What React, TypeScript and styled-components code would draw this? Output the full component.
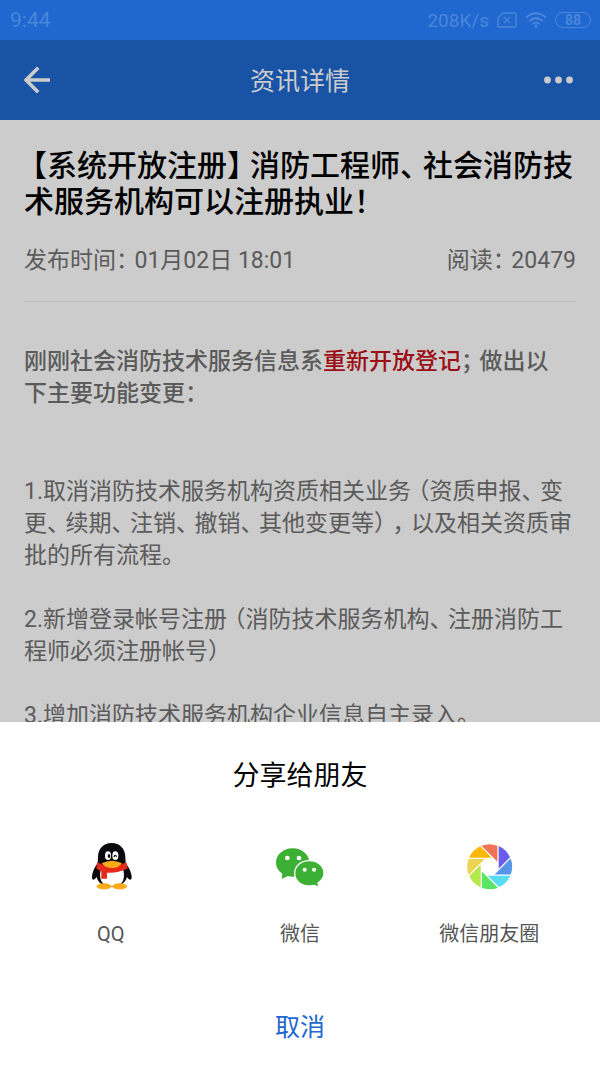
import React from 'react';
import styled, { createGlobalStyle } from 'styled-components';

const GlobalStyle = createGlobalStyle`
  * { box-sizing: border-box; }
  body {
    margin: 0;
    background: #ffffff;
    font-family: Roboto, 'Noto Sans CJK SC', sans-serif;
  }
  button { border: 0; padding: 0; background: none; font: inherit; cursor: pointer; }
  h1, h2, p { margin: 0; }
`;

const Screen = styled.div`
  min-height: 100vh;
  display: flex;
  flex-direction: column;
`;

const StatusBar = styled.div`
  display: flex;
  align-items: center;
  justify-content: space-between;
  height: 40px;
  padding: 0 9px 0 10px;
  background: #2068d0;
  color: #4a86da;
  font-size: 21px;
`;

const StatusGroup = styled.div`
  display: flex;
  align-items: center;
  gap: 8px;
`;

const Speed = styled.span`
  font-size: 19px;
`;

const Battery = styled.span`
  width: 36px;
  height: 16px;
  border: 1px solid currentColor;
  border-radius: 8px;
  font-size: 14px;
  font-weight: 700;
  line-height: 14px;
  text-align: center;
`;

const NavBar = styled.header`
  display: grid;
  grid-template-columns: 80px 1fr 80px;
  align-items: center;
  height: 80px;
  background: #2068d0;
  color: #ffffff;
`;

const NavTitle = styled.h2`
  padding-top: 4px;
  font-size: 25px;
  font-weight: 400;
  line-height: 32px;
  text-align: center;
`;

const NavButton = styled.button<{ $end?: boolean }>`
  display: flex;
  justify-content: ${(p) => (p.$end ? 'flex-end' : 'flex-start')};
  padding: 24px;
  color: inherit;
`;

const Article = styled.article`
  padding: 28px 24px;
  color: #727272;
  font-size: 23px;
  line-height: 32px;
`;

const Meta = styled.div`
  display: flex;
  justify-content: space-between;
  margin-bottom: 44px;
  padding: 24px 0;
  padding-top: 25px;
  border-bottom: 1px solid #ececec;
`;

const Lead = styled.p`
  margin-bottom: 66px;
  font-weight: 500;
`;

const Highlight = styled.span`
  color: #c2121a;
`;

const Paragraph = styled.p`
  margin-bottom: 32px;
`;

/* Half-width punctuation, with the remaining air kept on its outer side. */
const Mark = styled.span<{ $open?: boolean }>`
  margin: ${(p) => (p.$open ? '0 0 0 7px' : '0 7px 0 0')};
  font-feature-settings: 'halt';
`;

const Headline = styled.h1`
  color: #000000;
  font-size: 30px;
  font-weight: 500;
  line-height: 36px;

  ${Mark} {
    margin-right: 8px;
  }
  ${Mark}:first-child {
    margin-right: 0;
    margin-left: 8px;
  }
`;

const Scrim = styled.div`
  position: fixed;
  inset: 40px 0 0;
  background: rgba(0, 0, 0, 0.2);
`;

const Sheet = styled.section`
  position: fixed;
  inset: auto 0 0;
  display: flex;
  flex-direction: column;
  padding: 38px 16px 19px;
  background: #ffffff;
`;

const SheetTitle = styled.h2`
  margin-bottom: 43px;
  font-size: 27px;
  font-weight: 400;
  line-height: 32px;
  text-align: center;
`;

const Targets = styled.div`
  display: grid;
  grid-template-columns: repeat(3, 1fr);
  margin-bottom: 62px;
`;

const Target = styled.button`
  display: flex;
  flex-direction: column;
  align-items: center;
  gap: 27px;
  color: #555555;
  font-size: 20px;
  line-height: 24px;
`;

const Cancel = styled.button`
  color: #2068d0;
  font-size: 25px;
  line-height: 40px;
`;

const SimIcon = () => (
  <svg width="20" height="16" viewBox="0 0 20 16" fill="none" stroke="currentColor" strokeWidth="1.4">
    <path d="M6 1h12q1 0 1 1v12q0 1-1 1H2q-1 0-1-1V6z" />
    <path d="M7 5l6 6M13 5l-6 6" />
  </svg>
);

const WifiIcon = () => (
  <svg width="22" height="16" viewBox="0 0 22 16" fill="none" stroke="currentColor" strokeWidth="2">
    <path d="M1 5.5Q11-3 21 5.5M4.2 9Q11 3.2 17.8 9M7.4 12Q11 9 14.6 12" />
    <circle cx="11" cy="14" r="1.6" fill="currentColor" stroke="none" />
  </svg>
);

const BackIcon = () => (
  <svg width="27" height="28" viewBox="0 0 27 28" fill="none" stroke="currentColor" strokeWidth="3.6">
    <path d="M26 14H2M14.2 1.8L2 14l12.2 12.2" />
  </svg>
);

const MoreIcon = () => (
  <svg width="32" height="8" viewBox="0 0 32 8" fill="currentColor">
    <circle cx="3.5" cy="4" r="3.4" />
    <circle cx="14.5" cy="4" r="3.4" />
    <circle cx="25.5" cy="4" r="3.4" />
  </svg>
);

const QQIcon = () => (
  <svg width="60" height="60" viewBox="0 0 180 180">
    <path
      d="M92 24C67 24 51 42 51 66L50 84C41 97 33 112 33 126c0 11 6 11 14 0 4 18 20 29 45 29s41-11 46-29c7 11 14 11 14 0 0-14-9-29-18-42l-1-18C133 42 117 24 92 24z"
      fill="#0b0b0d"
    />
    <path d="M59 104q34 14 68 0 10 50-34 50-43 0-34-50z" fill="#fff" />
    <ellipse cx="69" cy="154" rx="22" ry="9" fill="#fbab18" />
    <ellipse cx="116" cy="154" rx="22" ry="9" fill="#fbab18" />
    <ellipse cx="81" cy="62" rx="9" ry="13" fill="#fff" />
    <ellipse cx="103" cy="62" rx="9" ry="13" fill="#fff" />
    <ellipse cx="84" cy="63" rx="4" ry="6" fill="#111" />
    <path d="M99 66q3-9 8-1" fill="none" stroke="#111" strokeWidth="4" />
    <path d="M49 81q43 28 87 0l4 19q-27 15-62 13v18H61v-22q-9-3-15-9z" fill="#e7291c" />
    <path d="M62 85q30-15 61 0-9 14-30 14T62 85z" fill="#fbab18" />
  </svg>
);

const WeChatIcon = () => (
  <svg width="60" height="60" viewBox="0 0 180 180">
    <path
      d="M68 40c-28 0-50 19-50 43 0 14 7 25 19 33l-2 16 18-9c5 1 10 2 15 2 28 0 50-18 50-42S96 40 68 40z"
      fill="#3cb035"
    />
    <path
      d="M118 77c-25 0-44 16-44 38s19 38 44 38c5 0 10-1 14-2l15 6-3-13c11-7 18-17 18-29 0-22-19-38-44-38z"
      fill="#3cb035"
      stroke="#fff"
      strokeWidth="4"
    />
    <g fill="#fff">
      <circle cx="52" cy="69" r="7" />
      <circle cx="87" cy="69" r="7" />
      <circle cx="104" cy="104" r="6" />
      <circle cx="132" cy="104" r="6" />
    </g>
  </svg>
);

const BLADES = ['#6b5bea', '#5596e8', '#57dcf0', '#5be565', '#b5e84c', '#ecd352', '#ffb808', '#f07458'];

const MomentsIcon = () => (
  <svg width="60" height="60" viewBox="0 0 180 180">
    <g transform="translate(92 95)">
      {BLADES.map((fill, i) => (
        <path key={fill} d="M27 6V-62A67 67 0 0 1 61-28z" fill={fill} transform={`rotate(${i * 45})`} />
      ))}
    </g>
  </svg>
);

const TARGETS = [
  { label: 'QQ', Icon: QQIcon },
  { label: '微信', Icon: WeChatIcon },
  { label: '微信朋友圈', Icon: MomentsIcon },
];

export default function App() {
  return (
    <Screen>
      <GlobalStyle />
      <StatusBar>
        <span>9:44</span>
        <StatusGroup>
          <Speed>208K/s</Speed>
          <SimIcon />
          <WifiIcon />
          <Battery>88</Battery>
        </StatusGroup>
      </StatusBar>
      <NavBar>
        <NavButton aria-label="返回">
          <BackIcon />
        </NavButton>
        <NavTitle>资讯详情</NavTitle>
        <NavButton $end aria-label="更多">
          <MoreIcon />
        </NavButton>
      </NavBar>
      <Article>
        <Headline>
          <Mark $open>【</Mark>系统开放注册<Mark>】</Mark>消防工程师<Mark>、</Mark>社会消防技术服务机构可以注册执业！
        </Headline>
        <Meta>
          <span>发布时间<Mark>：</Mark>01月02日 18:01</span>
          <span>阅读<Mark>：</Mark>20479</span>
        </Meta>
        <Lead>
          刚刚社会消防技术服务信息系<Highlight>重新开放登记</Highlight><Mark>；</Mark>做出以<br />
          下主要功能变更：
        </Lead>
        <Paragraph>
          1.取消消防技术服务机构资质相关业务<Mark $open>（</Mark>资质申报<Mark>、</Mark>变更<Mark>、</Mark>续期<Mark>、</Mark>注销<Mark>、</Mark>撤销<Mark>、</Mark>其他变更等<Mark>）</Mark><Mark>，</Mark>以及相关资质审批的所有流程。
        </Paragraph>
        <Paragraph>
          2.新增登录帐号注册<Mark $open>（</Mark>消防技术服务机构<Mark>、</Mark>注册消防工程师必须注册帐号）
        </Paragraph>
        <Paragraph>3.增加消防技术服务机构企业信息自主录入。</Paragraph>
      </Article>
      <Scrim />
      <Sheet role="dialog" aria-label="分享给朋友">
        <SheetTitle>分享给朋友</SheetTitle>
        <Targets>
          {TARGETS.map(({ label, Icon }) => (
            <Target key={label}>
              <Icon />
              {label}
            </Target>
          ))}
        </Targets>
        <Cancel>取消</Cancel>
      </Sheet>
    </Screen>
  );
}
